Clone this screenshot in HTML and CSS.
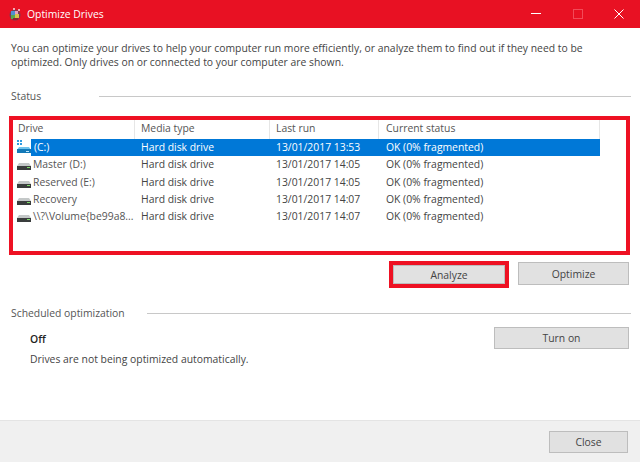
FILE: index.html
```html
<!DOCTYPE html>
<html lang="en">
<head>
<meta charset="utf-8">
<title>Optimize Drives</title>
<link rel="stylesheet" href="styles.css">
</head>
<body>
<div class="window">
  <header class="titlebar">
    <svg class="app-icon" width="14" height="14" viewBox="0 0 14 14">
      <circle cx="7" cy="8" r="5.5" fill="#7a3b52"/>
      <rect x="3" y="4" width="4" height="4" fill="#4f8fd0"/>
      <rect x="7" y="4" width="3" height="3" fill="#e8a0c0"/>
      <rect x="3" y="8" width="4" height="4" fill="#55a84f"/>
      <rect x="7" y="7" width="4" height="4" fill="#d9c24a"/>
      <circle cx="11" cy="3" r="1" fill="#f8dce8"/>
      <circle cx="6" cy="2" r="1" fill="#f8dce8"/>
      <rect x="5" y="11" width="5" height="2" fill="#8e2330"/>
    </svg>
    <span class="title">Optimize Drives</span>
    <div class="controls">
      <svg class="ctl" width="10" height="10" viewBox="0 0 10 10"><rect x="0" y="4" width="10" height="1" fill="#fff"/></svg>
      <svg class="ctl" width="10" height="10" viewBox="0 0 10 10"><rect x=".5" y=".5" width="9" height="9" fill="none" stroke="#f24a58"/></svg>
      <svg class="ctl" width="10" height="10" viewBox="0 0 10 10"><path d="M.5.5l9 9M9.5.5l-9 9" stroke="#fff" fill="none"/></svg>
    </div>
  </header>

  <main class="content">
    <p class="intro">You can optimize your drives to help your computer run more efficiently, or analyze them to find out if they need to be<br>optimized. Only drives on or connected to your computer are shown.</p>

    <div class="group-head status-head"><span>Status</span><i class="rule"></i></div>

    <section class="listbox">
      <div class="row head">
        <div class="c1">Drive</div><div class="c2">Media type</div><div class="c3">Last run</div><div class="c4">Current status</div>
      </div>
      <div class="row selected">
        <div class="c1">
          <svg class="drive" width="14" height="14" viewBox="0 0 14 14"><rect x="0" y="0" width="2" height="2" fill="#2f9be0"/><rect x="3" y="0" width="2" height="2" fill="#2f9be0"/><rect x="0" y="3" width="2" height="2" fill="#2f9be0"/><rect x="3" y="3" width="2" height="2" fill="#2f9be0"/><path d="M2 7h10l2 3H0z" fill="#6fc3ec"/><rect x="0" y="9" width="14" height="4" fill="#1279b8"/><rect x="9" y="11" width="3" height="1" fill="#bfe8ff"/></svg>
          <span class="name">(C:)</span>
        </div>
        <div class="c2">Hard disk drive</div><div class="c3">13/01/2017 13:53</div><div class="c4">OK (0% fragmented)</div>
      </div>
      <div class="row">
        <div class="c1"><svg class="drive" width="14" height="14" viewBox="0 0 14 14"><path d="M2 6h10l2 3H0z" fill="#c4c8c8"/><rect x="0" y="9" width="14" height="4" fill="#3a3d3d"/><rect x="10" y="10" width="3" height="1" fill="#7ddb6a"/></svg><span class="name">Master (D:)</span></div>
        <div class="c2">Hard disk drive</div><div class="c3">13/01/2017 14:05</div><div class="c4">OK (0% fragmented)</div>
      </div>
      <div class="row">
        <div class="c1"><svg class="drive" width="14" height="14" viewBox="0 0 14 14"><path d="M2 6h10l2 3H0z" fill="#c4c8c8"/><rect x="0" y="9" width="14" height="4" fill="#3a3d3d"/><rect x="10" y="10" width="3" height="1" fill="#7ddb6a"/></svg><span class="name">Reserved (E:)</span></div>
        <div class="c2">Hard disk drive</div><div class="c3">13/01/2017 14:05</div><div class="c4">OK (0% fragmented)</div>
      </div>
      <div class="row">
        <div class="c1"><svg class="drive" width="14" height="14" viewBox="0 0 14 14"><path d="M2 6h10l2 3H0z" fill="#c4c8c8"/><rect x="0" y="9" width="14" height="4" fill="#3a3d3d"/><rect x="10" y="10" width="3" height="1" fill="#7ddb6a"/></svg><span class="name">Recovery</span></div>
        <div class="c2">Hard disk drive</div><div class="c3">13/01/2017 14:07</div><div class="c4">OK (0% fragmented)</div>
      </div>
      <div class="row">
        <div class="c1"><svg class="drive" width="14" height="14" viewBox="0 0 14 14"><path d="M2 6h10l2 3H0z" fill="#c4c8c8"/><rect x="0" y="9" width="14" height="4" fill="#3a3d3d"/><rect x="10" y="10" width="3" height="1" fill="#7ddb6a"/></svg><span class="name">\\?\Volume{be99a8...</span></div>
        <div class="c2">Hard disk drive</div><div class="c3">13/01/2017 14:07</div><div class="c4">OK (0% fragmented)</div>
      </div>
    </section>

    <div class="actions">
      <div class="highlight"><button class="btn analyze">Analyze</button></div>
      <button class="btn optimize">Optimize</button>
    </div>

    <div class="group-head sched-head"><span>Scheduled optimization</span><i class="rule"></i></div>

    <div class="schedule">
      <div class="sched-text">
        <div class="off">Off</div>
        <div class="off-desc">Drives are not being optimized automatically.</div>
      </div>
      <button class="btn turn-on">Turn on</button>
    </div>
  </main>

  <footer class="footer"><button class="btn close">Close</button></footer>
</div>
</body>
</html>
```
FILE: styles.css
```css
* { box-sizing: border-box; }
html, body { margin: 0; height: 100%; }
body {
  font-family: "Open Sans", "Noto Sans", sans-serif;
  font-size: 10.39px;
  color: #444;
  background: #fff;
  overflow: hidden;
}
.window { width: 640px; height: 462px; display: flex; flex-direction: column; }
.titlebar {
  height: 28px;
  flex: none;
  background: #e81123;
  color: #fff;
  display: flex;
  align-items: center;
  padding: 0 0 1px 8px;
}
.title { margin-left: 5px; }
.app-icon { flex: none; }
.controls { margin-left: auto; display: flex; gap: 31.5px; padding-right: 16px; }
.ctl { display: block; }
.content { flex: 1; padding: 13px 9px 0 11px; display: flex; flex-direction: column; }
.intro { margin: 0; line-height: 14px; }
.group-head { display: flex; align-items: center; height: 14px; color: #555; }
.group-head .rule { flex: 1; height: 1px; background: #c8c8c8; margin-top: 1px; }
.status-head { margin-top: 20px; }
.status-head .rule { margin-left: 58px; }
.sched-head { margin-top: 18px; }
.sched-head .rule { margin-left: 22px; }
.listbox {
  margin: 13px 1px 0 -2px;
  height: 139px;
  border: 4px solid #ee1123;
  background: #fff;
}
.row { display: flex; height: 17.25px; align-items: center; white-space: nowrap; }
.row > div { flex: none; padding-left: 6px; }
.row .c1 { width: 122px; display: flex; align-items: center; padding-left: 0; }
.row .c2 { width: 135px; }
.row .c3 { width: 109px; }
.row .c4 { width: 221px; padding-left: 7px; }
.row.head { height: 18.5px; color: #555; }
.head > div { height: 100%; display: flex; align-items: center; padding-bottom: 3px; border-right: 1px solid #e6e6e6; }
.row.head .c1 { padding-left: 5px; }
.drive { flex: none; margin-left: 4px; }
.name { padding-left: 2px; flex: 1; overflow: hidden; color: #555; }
.selected > div { background: #0078d7; color: #fff; height: 100%; display: flex; align-items: center; }
.row.selected .c1 { background: none; }
.selected .name { background: #0078d7; color: #fff; height: 100%; display: flex; align-items: center; padding-left: 3px; }
.actions { display: flex; align-items: flex-start; margin: 6px 0 0 378px; gap: 9px; }
.highlight { border: 4px solid #ee1123; width: 120px; height: 27px; display: flex; }
.btn {
  font: inherit;
  color: #444;
  background: #e1e1e1;
  border: 1px solid #bdbdbd;
  padding: 0;
}
.analyze { flex: 1; }
.optimize { width: 111px; height: 23px; margin-top: 1px; }
.schedule { display: flex; align-items: flex-start; margin-top: 7px; }
.sched-text { margin-left: 19px; padding-top: 4px; flex: 1; }
.off { font-weight: 600; line-height: 14px; color: #222; padding-top: 1px; }
.off-desc { margin-top: 6px; line-height: 14px; }
.turn-on { width: 135px; height: 22px; margin: 0 2px 0 0; }
.footer {
  height: 42px;
  flex: none;
  background: #f0f0f0;
  border-top: 1px solid #e4e4e4;
  display: flex;
  justify-content: flex-end;
  align-items: flex-start;
  padding: 10px 12px 0 0;
}
.close { width: 79px; height: 22px; }
```
